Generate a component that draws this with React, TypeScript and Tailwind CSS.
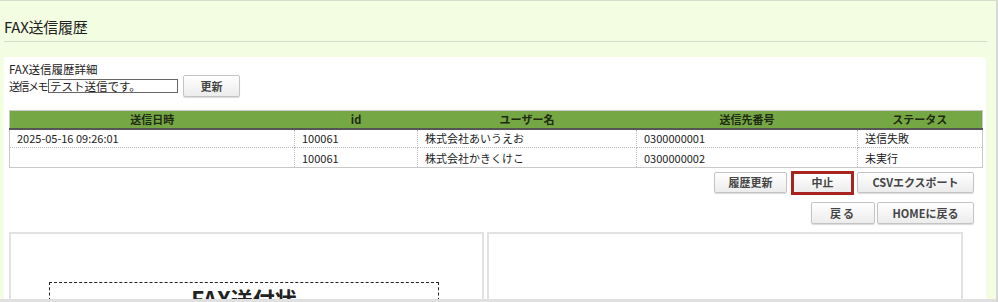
import React from "react";

const font = "font-['Noto_Sans_CJK_JP','Noto_Sans',sans-serif]";

function Btn({ children, className = "" }: { children: React.ReactNode; className?: string }) {
  return (
    <button
      className={`flex items-center justify-center rounded-[2px] border border-[#c4c4c4] bg-gradient-to-b from-white to-[#ececec] text-[11px] font-semibold text-[#444] shadow-[0_1px_1px_rgba(0,0,0,0.15)] ${className}`}
    >
      {children}
    </button>
  );
}

const rows = [
  { date: "2025-05-16 09:26:01", id: "100061", user: "株式会社あいうえお", tel: "0300000001", status: "送信失敗" },
  { date: "", id: "100061", user: "株式会社かきくけこ", tel: "0300000002", status: "未実行" },
];

export default function App() {
  return (
    <div
      className={`relative w-[998px] h-[302px] overflow-hidden bg-[#f2fde2] border-t border-[#d6dccf] border-r-2 border-r-[#d8d8d8] text-[#222] ${font}`}
    >
      {/* Title */}
      <div className="pl-[4px] pt-[16px] h-[40px] text-[15px] leading-[20px] tracking-[-0.3px]">FAX送信履歴</div>
      <div className="ml-[4px] w-[983px] h-[1px] bg-[#d3dbc9]" />

      {/* White panel */}
      <div className="mt-[15px] ml-[4px] w-[982px] h-[260px] bg-white rounded-tr-[4px] pt-[4px]">
        <div className="pl-[5px] text-[11.5px] leading-[16px]">FAX送信履歴詳細</div>
        <div className="flex items-center pl-[5px] mt-[-2px] h-[22px]">
          <span className="text-[11px] tracking-[-1.5px]">送信メモ</span>
          <input
            readOnly
            value="テスト送信です。"
            className="ml-[1px] w-[130px] h-[14px] border border-[#666] px-[1px] text-[11.5px] leading-[12px] outline-none"
          />
          <Btn className="ml-[5px] w-[57px] h-[22px]">更新</Btn>
        </div>

        {/* Table */}
        <div className="mt-[13px] pl-[5px] pr-[4px]">
          <table className="w-[973px] table-fixed border-collapse border border-[#c8c8c8] text-[11px]">
            <colgroup>
              <col className="w-[285px]" />
              <col className="w-[123px]" />
              <col className="w-[219px]" />
              <col className="w-[221px]" />
              <col className="w-[125px]" />
            </colgroup>
            <thead>
              <tr className="h-[18px] bg-[#76a745] border-b-2 border-b-[#555]">
                {["送信日時", "id", "ユーザー名", "送信先番号", "ステータス"].map((h) => (
                  <th key={h} className="font-bold text-[#1e2a12] text-center leading-[16px]">
                    {h}
                  </th>
                ))}
              </tr>
            </thead>
            <tbody>
              {rows.map((r, i) => (
                <tr key={i} className={i === 0 ? "h-[19px]" : "h-[20px]"}>
                  {[r.date, r.id, r.user, r.tel, r.status].map((c, j) => (
                    <td
                      key={j}
                      className="border border-dotted border-[#bdbdbd] pl-[7px] leading-[14px] align-middle text-[#222]"
                    >
                      {c}
                    </td>
                  ))}
                </tr>
              ))}
            </tbody>
          </table>
        </div>

        {/* Buttons */}
        <div className="flex justify-end items-center mt-[2px] pr-[12px] h-[25px]">
          <Btn className="w-[73px] h-[21px]">履歴更新</Btn>
          <div className="ml-[4px] w-[63px] h-[24px] border-[3px] border-[#a8241f] flex items-center justify-center">
            <Btn className="w-[57px] h-[18px] border-0 shadow-none">中止</Btn>
          </div>
          <Btn className="ml-[3px] w-[117px] h-[21px]">CSVエクスポート</Btn>
        </div>
        <div className="flex justify-end mt-[7px] pr-[12px]">
          <Btn className="w-[64px] h-[22px] tracking-[2px]">戻る</Btn>
          <Btn className="ml-[2px] w-[97px] h-[22px]">HOMEに戻る</Btn>
        </div>

        {/* Preview panels */}
        <div className="flex mt-[8px] pl-[5px] gap-[3px]">
          <div className="w-[475px] h-[80px] border-2 border-[#e2e2e2] pt-[48px] pl-[38px]">
            <div className="w-[390px] h-[40px] border border-dashed border-[#222] text-center text-[22px] font-bold leading-[28px] pt-[1px]">
              FAX送付状
            </div>
          </div>
          <div className="w-[476px] h-[80px] border-2 border-[#e2e2e2]" />
        </div>
      </div>

      {/* bottom bar */}
      <div className="absolute left-0 bottom-0 w-full h-[3px] bg-[#e0e0e0]" />
    </div>
  );
}
